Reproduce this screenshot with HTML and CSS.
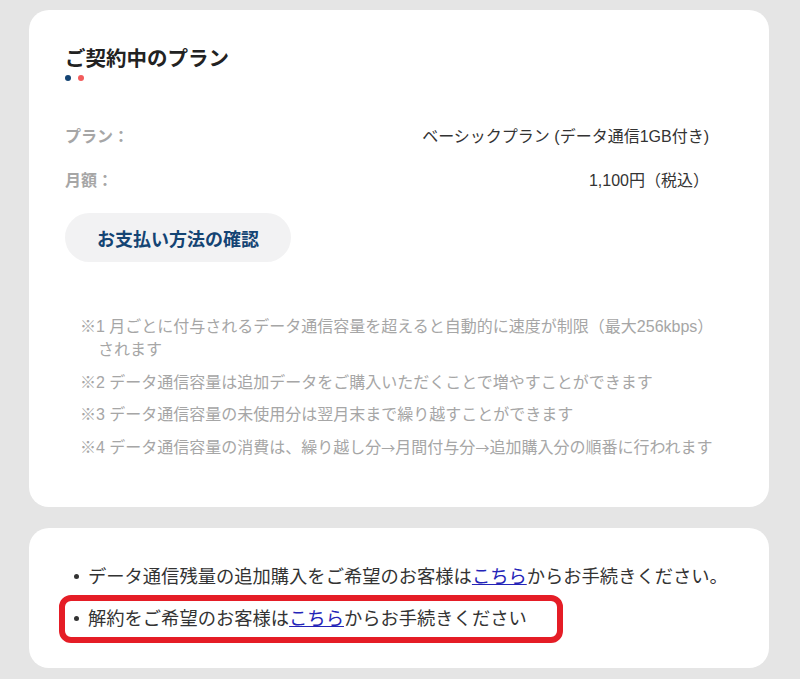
FILE: index.html
```html
<!DOCTYPE html>
<html lang="ja">
<head>
    <meta charset="UTF-8">
    <meta name="viewport" content="width=device-width, initial-scale=1.0">
    <title>ご契約中のプラン</title>
    <link rel="stylesheet" href="styles.css">
</head>
<body>
    <div class="page">
        <section class="card plan-card">
            <h2 class="title">ご契約中のプラン</h2>
            <div class="dots"><span class="dot navy"></span><span class="dot red"></span></div>

            <div class="rows">
                <div class="row">
                    <span class="label">プラン：</span>
                    <span class="value">ベーシックプラン (データ通信1GB付き)</span>
                </div>
                <div class="row">
                    <span class="label">月額：</span>
                    <span class="value">1,100円（税込）</span>
                </div>
            </div>

            <button class="pay-button">お支払い方法の確認</button>

            <ul class="notes">
                <li>※1 月ごとに付与されるデータ通信容量を超えると自動的に速度が制限（最大256kbps）されます</li>
                <li>※2 データ通信容量は追加データをご購入いただくことで増やすことができます</li>
                <li>※3 データ通信容量の未使用分は翌月末まで繰り越すことができます</li>
                <li>※4 データ通信容量の消費は、繰り越し分<span class="arrow">→</span>月間付与分<span class="arrow">→</span>追加購入分の順番に行われます</li>
            </ul>
        </section>

        <section class="card links-card">
            <ul class="links">
                <li>データ通信残量の追加購入をご希望のお客様は<a href="#">こちら</a>からお手続きください。</li>
                <li class="highlight">解約をご希望のお客様は<a href="#">こちら</a>からお手続きください</li>
            </ul>
        </section>
    </div>
</body>
</html>
```

FILE: styles.css
```css
:root {
    --bg: #e5e5e5;
    --text: #333333;
    --muted: #a6a6a6;
    --navy: #144473;
    --red: #f25c5c;
    --link: #2424b8;
    --mark: #e51d26;
}
body {
    margin: 0;
    background: var(--bg);
    color: var(--text);
    font-family: "Liberation Sans", "Noto Sans CJK JP", sans-serif;
}
.page {
    width: 740px;
    margin-left: 29px;
    padding: 10px 0 11px;
    display: flex;
    flex-direction: column;
    gap: 21px;
}
.card {
    background: #ffffff;
    border-radius: 20px;
}
.plan-card {
    padding: 35px 36px 48px;
}
.title {
    margin: 0;
    font-size: 20.5px;
    line-height: 28px;
    font-weight: bold;
    color: #222222;
}
.dots {
    display: flex;
    gap: 7px;
    margin-top: 2px;
}
.dot {
    width: 6px;
    height: 6px;
    border-radius: 50%;
}
.dot.navy { background: var(--navy); }
.dot.red { background: var(--red); }
.rows {
    margin-top: 44px;
    padding-right: 24px;
    display: flex;
    flex-direction: column;
    gap: 20px;
}
.row {
    display: flex;
    justify-content: space-between;
    font-size: 16px;
    line-height: 24px;
}
.label {
    color: var(--muted);
    font-weight: bold;
}
.value {
    color: var(--text);
}
.pay-button {
    margin-top: 20px;
    height: 49px;
    padding: 0 32px;
    border: none;
    border-radius: 25px;
    background: #f2f2f3;
    color: var(--navy);
    font-family: inherit;
    font-size: 18px;
    font-weight: bold;
    cursor: pointer;
}
.notes {
    list-style: none;
    margin: 53px 0 0;
    padding: 0 14px 0 33px;
    color: var(--muted);
    font-size: 16px;
    line-height: 23px;
}
.notes li {
    text-indent: -18px;
    margin-bottom: 9.5px;
}
.notes li:last-child {
    margin-bottom: 0;
}
.notes .arrow {
    font-family: "Noto Sans CJK JP", sans-serif;
    font-size: 14px;
}
.links-card {
    padding: 35px 30px 25px;
}
.links {
    list-style: none;
    margin: 0;
    padding: 0;
    font-size: 18.3px;
    line-height: 28px;
}
.links li {
    display: flex;
    align-items: center;
    padding-left: 15px;
}
.links li::before {
    content: "";
    width: 5px;
    height: 5px;
    border-radius: 50%;
    background: var(--text);
    margin-right: 9px;
    flex-shrink: 0;
}
.links li + li {
    margin-top: 4px;
}
.links .highlight {
    width: fit-content;
    border: 6px solid var(--mark);
    border-radius: 12px;
    padding: 0 30px 0 9px;
    line-height: 36px;
}
.links a {
    color: var(--link);
    text-decoration: underline;
}
```
